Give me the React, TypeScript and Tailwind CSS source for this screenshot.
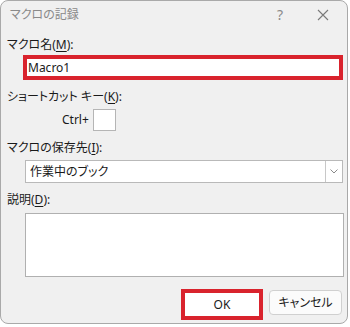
import React from "react";

const U = ({ c }: { c: string }) => <span className="underline underline-offset-2">{c}</span>;

export default function App() {
  return (
    <div
      className="w-[350px] h-[327px] bg-white text-[12px] text-[#1a1a1a] [font-feature-settings:'palt']"
      style={{ fontFamily: '"Noto Sans", "Noto Sans CJK JP", sans-serif' }}
    >
      <div className="w-[348px] h-[324px] bg-[#f0f0f0] border border-[#a9a9a9] rounded-[8px] flex flex-col overflow-hidden">
        {/* title bar */}
        <div className="h-[28px] flex items-center pl-[9px] text-[#8a8a8a] shrink-0">
          <span className="leading-[16px]">マクロの記録</span>
          <span className="ml-auto w-[14px] text-center text-[14px] leading-[16px] text-[#8a8a8a]">?</span>
          <svg className="ml-[30px] mr-[18px]" width="12" height="12" viewBox="0 0 12 12">
            <path d="M1 1 L11 11 M11 1 L1 11" stroke="#7a7a7a" strokeWidth="1.1" fill="none" />
          </svg>
        </div>

        {/* macro name */}
        <div className="mt-[8px] pl-[6px] h-[16px] leading-[16px]">
          マクロ名(<U c="M" />):
        </div>
        <div className="mt-[2px] ml-[22px] w-[320px] h-[25px] border-[4px] border-[#d9232d] bg-white flex items-center pl-[1px]">
          <span className="leading-[16px]">Macro1</span>
        </div>

        {/* shortcut */}
        <div className="mt-[9px] pl-[6px] h-[16px] leading-[16px]">
          ショートカット キー(<U c="K" />):
        </div>
        <div className="mt-[4px] flex items-center h-[22px]">
          <span className="ml-[61px] leading-[16px]">Ctrl+</span>
          <div className="ml-[4px] w-[23px] h-[22px] bg-white border border-[#b5b5b5]" />
        </div>

        {/* store location */}
        <div className="mt-[9px] pl-[6px] h-[16px] leading-[16px]">
          マクロの保存先(<U c="I" />):
        </div>
        <div className="mt-[4px] ml-[24px] w-[318px] h-[23px] bg-white border border-[#b9b9b9] flex items-center">
          <span className="pl-[4px] leading-[16px]">作業中のブック</span>
          <div className="ml-auto h-full w-[17px] border-l border-[#c8c8c8] flex items-center justify-center">
            <svg width="8" height="5" viewBox="0 0 8 5">
              <path d="M0.5 0.5 L4 4 L7.5 0.5" stroke="#8a8a8a" strokeWidth="1" fill="none" />
            </svg>
          </div>
        </div>

        {/* description */}
        <div className="mt-[9px] pl-[6px] h-[16px] leading-[16px]">
          説明(<U c="D" />):
        </div>
        <div className="mt-[5px] ml-[24px] w-[319px] h-[64px] bg-white border border-[#b0b0b0]" />

        {/* buttons */}
        <div className="mt-[12px] flex items-start">
          <div className="ml-[180px] w-[82px] h-[31px] border-[4px] border-[#d9232d] bg-white flex items-center justify-center">
            <span className="leading-[16px]">OK</span>
          </div>
          <div className="ml-[6px] mt-[1px] w-[73px] h-[25px] bg-[#fbfbfb] border border-[#d0d0d0] rounded-[4px] flex items-center justify-center">
            <span className="leading-[16px]">キャンセル</span>
          </div>
        </div>
      </div>
    </div>
  );
}
